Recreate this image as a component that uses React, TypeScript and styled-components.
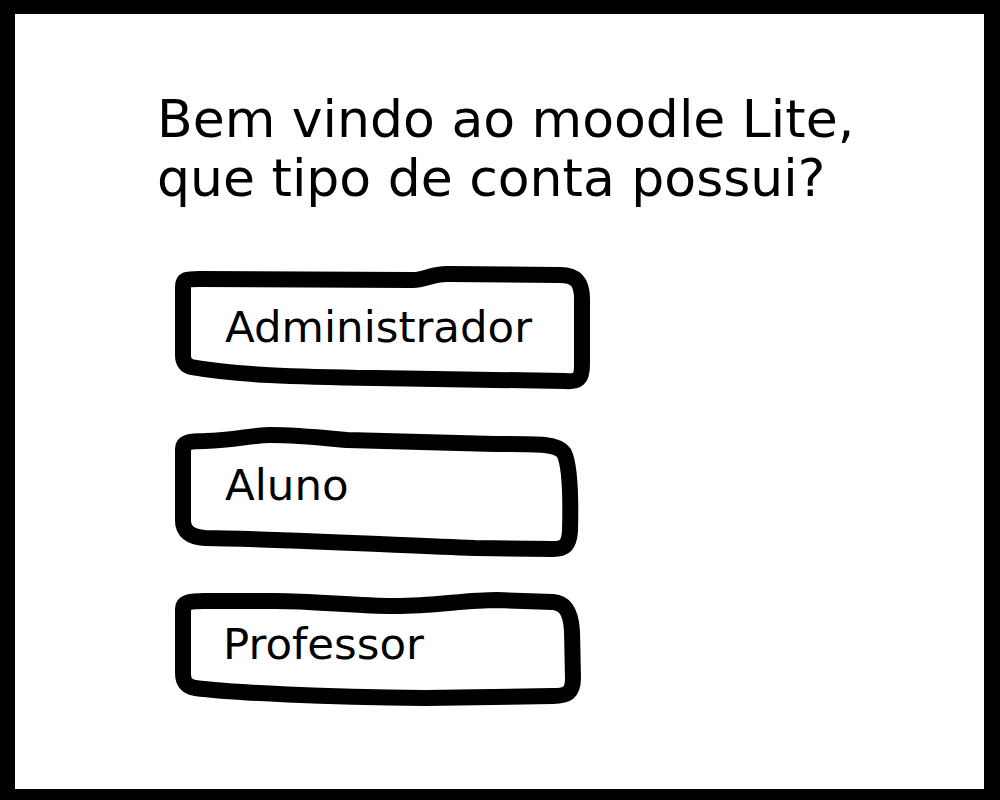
import React from "react";
import styled, { createGlobalStyle } from "styled-components";

const Global = createGlobalStyle`
  html, body { margin: 0; padding: 0; background: #fff; }
  * { box-sizing: border-box; }
`;

const Frame = styled.div`
  width: 1000px;
  height: 800px;
  border-style: solid;
  border-color: #000;
  border-width: 14px 16px 11px 15px;
  background: #fff;
  padding: 76px 0 0 142px;
  display: flex;
  flex-direction: column;
  font-family: "DejaVu Sans", Verdana, sans-serif;
  color: #000;
`;

const Title = styled.h1`
  margin: 0;
  font-weight: 400;
  font-size: 52px;
  line-height: 59px;
`;

const Options = styled.div`
  display: flex;
  flex-direction: column;
  margin-top: 61px;
  margin-left: 18px;
`;

const Option = styled.div<{ $w: number; $h: number; $mt: number; $pt: number; $pl: number }>`
  position: relative;
  display: flex;
  align-items: flex-start;
  width: ${(p) => p.$w}px;
  height: ${(p) => p.$h}px;
  margin-top: ${(p) => p.$mt}px;
  padding: ${(p) => p.$pt}px 0 0 ${(p) => p.$pl}px;
  font-family: "DejaVu Sans", Verdana, sans-serif;
  font-size: 43.5px;
  line-height: 50px;
  color: #000;
  cursor: pointer;
`;

const Outline = styled.svg`
  position: absolute;
  inset: 0;
  overflow: visible;
  pointer-events: none;
`;

const Label = styled.span`
  position: relative;
  display: block;
`;

type Opt = { label: string; w: number; h: number; mt: number; pt: number; pl: number; d: string };

const options: Opt[] = [
  {
    label: "Administrador",
    w: 416,
    h: 120,
    mt: 0,
    pt: 33,
    pl: 50,
    d: "M 8 18 C 8 10, 12 10, 24 10 L 238 11 C 250 11, 256 5, 272 5 L 385 6 C 402 6, 407 14, 407 30 L 407 96 C 407 110, 403 113, 390 112 L 200 109 C 120 108, 60 106, 16 98 C 10 96, 8 92, 8 86 Z",
  },
  {
    label: "Aluno",
    w: 405,
    h: 128,
    mt: 42,
    pt: 29,
    pl: 50,
    d: "M 8 18 C 8 11, 15 10, 30 10 C 60 9, 78 4, 95 4 C 122 4, 150 7, 172 9 L 320 13 C 360 13, 382 12, 389 22 C 395 34, 396 62, 395 100 C 394 114, 390 118, 378 118 L 300 117 C 200 113, 100 108, 30 107 C 15 106, 8 100, 8 90 Z",
  },
  {
    label: "Professor",
    w: 407,
    h: 116,
    mt: 34,
    pt: 26,
    pl: 48,
    d: "M 8 16 C 8 9, 15 8, 30 8 L 100 8 C 140 8, 180 13, 220 13 C 260 13, 290 7, 322 7 L 378 9 C 392 10, 396 22, 397 38 L 398 85 C 398 100, 392 103, 378 103 L 250 105 C 150 104, 60 100, 20 95 C 10 93, 8 88, 8 80 Z",
  },
];

export default function App() {
  return (
    <>
      <Global />
      <Frame>
        <Title>
          Bem vindo ao moodle Lite,
          <br />
          que tipo de conta possui?
        </Title>
        <Options>
          {options.map((o) => (
            <Option key={o.label} role="button" $w={o.w} $h={o.h} $mt={o.mt} $pt={o.pt} $pl={o.pl}>
              <Outline width={o.w} height={o.h} viewBox={`0 0 ${o.w} ${o.h}`}>
                <path d={o.d} fill="none" stroke="#000" strokeWidth={16} strokeLinejoin="round" strokeLinecap="round" />
              </Outline>
              <Label>{o.label}</Label>
            </Option>
          ))}
        </Options>
      </Frame>
    </>
  );
}
